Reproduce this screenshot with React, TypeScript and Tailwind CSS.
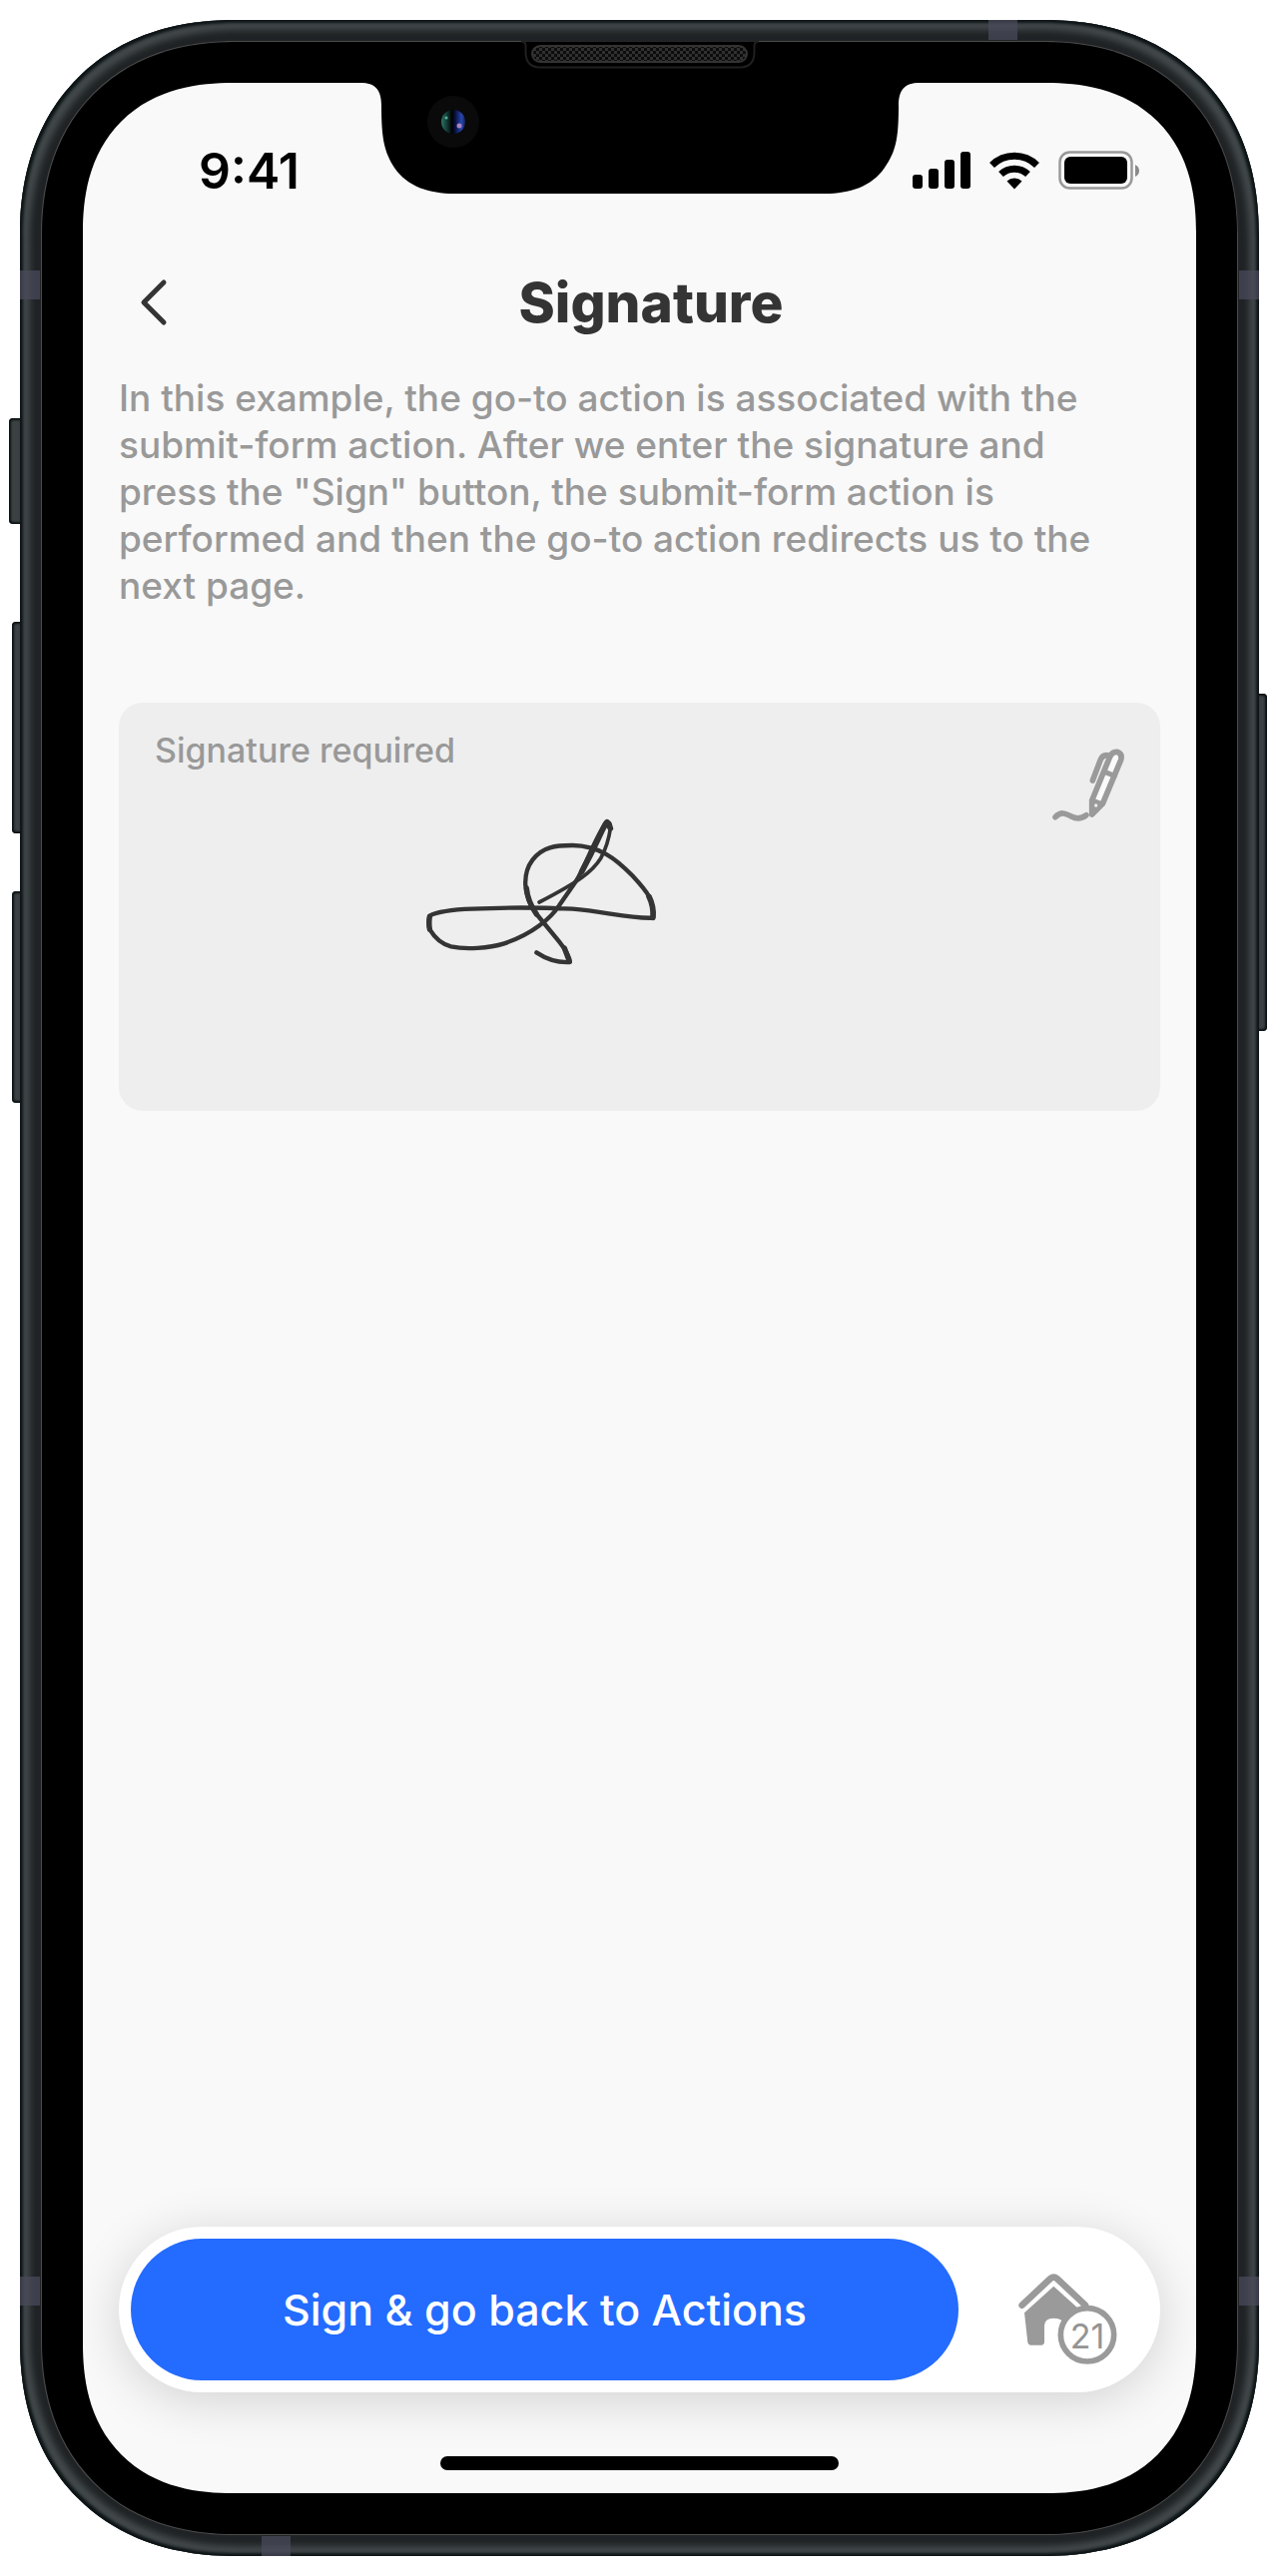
import React from "react";

function SideKeys() {
  const key =
    "absolute bg-[#3b4042] shadow-[inset_0_0_2px_2px_#0c1214]";
  return (
    <>
      <span className={`${key} -left-[11px] top-[399px] h-[106px] w-[14px] rounded-l-[4px]`} />
      <span className={`${key} -left-2 top-[603px] h-[212px] w-[11px] rounded-l-[4px]`} />
      <span className={`${key} -left-2 top-[873px] h-[212px] w-[11px] rounded-l-[4px]`} />
      <span className={`${key} -right-2 top-[675px] h-[338px] w-[11px] rounded-r-[4px]`} />
    </>
  );
}

function AntennaBands() {
  const band = "absolute bg-[#4c4c5c]/70";
  return (
    <>
      <span className={`${band} left-0 top-[251px] h-[29px] w-5`} />
      <span className={`${band} right-0 top-[251px] h-[29px] w-5`} />
      <span className={`${band} bottom-[251px] left-0 h-[29px] w-5`} />
      <span className={`${band} bottom-[251px] right-0 h-[29px] w-5`} />
      <span className={`${band} right-[242px] top-0 h-5 w-[29px]`} />
      <span className={`${band} bottom-0 left-[242px] h-5 w-[29px]`} />
    </>
  );
}

function Notch() {
  return (
    <svg
      className="absolute -top-px left-1/2 -translate-x-1/2"
      width="562"
      height="154"
      viewBox="360 41 562 154"
      aria-hidden="true"
    >
      <defs>
        <pattern id="mesh" width="6" height="6" patternUnits="userSpaceOnUse">
          <rect width="6" height="6" fill="#0c0c0c" />
          <rect width="3" height="3" fill="#303030" />
          <rect x="3" y="3" width="3" height="3" fill="#303030" />
        </pattern>
        <linearGradient id="lens" x1="0" x2="1" y1="0" y2="0">
          <stop offset="0" stopColor="#2b7565" />
          <stop offset="0.3" stopColor="#0c2a26" />
          <stop offset="0.45" stopColor="#000" />
          <stop offset="0.6" stopColor="#0a1446" />
          <stop offset="0.85" stopColor="#2746b0" />
          <stop offset="1" stopColor="#15204d" />
        </linearGradient>
      </defs>
      <path
        d="M361 82H921V83C906 83 900 90 900 106C900 140 897 152 886 168C873 187 851 194 826 194H455C430 194 408 187 395 168C385 152 382 140 382 106C382 90 376 83 361 83Z"
        fill="#000"
      />
      <path
        d="M522 41.500Q526.500 41.500 526.500 46V52Q526.500 67.500 541 67.500H741Q755.500 67.500 755.500 52V46Q755.500 41.500 760 41.500"
        fill="#000"
        stroke="#202020"
        strokeWidth="2"
      />
      <rect x="533" y="46" width="215" height="16" rx="8" fill="url(#mesh)" stroke="#333" strokeWidth="2" />
      <circle cx="454" cy="122" r="26" fill="#0a0a0b" />
      <circle cx="454" cy="122" r="12" fill="url(#lens)" />
      <circle cx="460" cy="126" r="2.500" fill="#a884c4" />
      <circle cx="447" cy="118" r="1.500" fill="#58b09c" />
    </svg>
  );
}

function StatusIcons() {
  return (
    <svg width="228" height="40" viewBox="915 151 228 40" role="img" aria-label="Signal, Wi-Fi and battery">
      <rect x="915" y="175" width="10" height="14" rx="3" />
      <rect x="931" y="169" width="10" height="20" rx="3" />
      <rect x="947" y="160" width="10" height="29" rx="3" />
      <rect x="963" y="152" width="10" height="37" rx="3" />
      <g fill="none" stroke="#000" strokeWidth="7">
        <path d="M994.500 165.500A32 32 0 0 1 1039.500 165.500" />
        <path d="M1003.500 174.500A20 20 0 0 1 1030.500 174.500" />
      </g>
      <path d="M1017 189.500L1009.500 181.500A11 11 0 0 1 1024.500 181.500Z" />
      <rect x="1062.500" y="152.500" width="72" height="36" rx="10" fill="none" stroke="#999" strokeWidth="2.500" />
      <rect x="1067" y="157" width="63" height="27" rx="6" />
      <path d="M1138 165Q1142 167 1142 171T1138 177Z" fill="#8a8a8a" />
    </svg>
  );
}

function Signature() {
  return (
    <svg
      className="absolute left-[281px] top-[86px]"
      width="280"
      height="200"
      viewBox="0 0 840 600"
      role="img"
      aria-label="Handwritten signature"
      fill="none"
      stroke="#343434"
      strokeLinecap="round"
      strokeLinejoin="round"
    >
      <path
        d="M412 493Q460 525 512 522Q512 500 480 460L410 375C370 320 370 255 400 215C430 175 470 171 520 171C600 172 650 210 700 262C750 316 764 335 762 389C690 392 620 370 520 362C430 358 300 358 220 362C160 364 110 372 91 383C86 400 88 415 92 425C110 455 135 470 155 475C200 485 270 480 315 466C400 438 455 390 480 352L530 280C560 235 590 140 624 101"
        strokeWidth="13"
      />
      <path d="M624 101Q634 100 635 115C630 150 622 180 605 210C580 250 540 280 420 342" strokeWidth="11" />
      <path d="M548 250Q575 200 598 150T624 101L634 120" strokeWidth="17" />
      <path d="M762 388Q765 355 750 325" strokeWidth="17" />
      <path d="M91 423Q88 405 91 385M382 300Q386 340 412 378M496 480L511 520" strokeWidth="16" />
    </svg>
  );
}

function PenIcon() {
  return (
    <svg
      className="absolute right-8 top-[45px]"
      width="76"
      height="78"
      viewBox="105 178 228 234"
      aria-hidden="true"
      fill="none"
      stroke="#9a9a9a"
      strokeLinecap="round"
      strokeLinejoin="round"
    >
      <path d="M114 387C130 370 143 375 162 385S198 388 207 381" strokeWidth="17" />
      <path d="M224 379L224 337L277 208Q284 190 299 191Q316 196 311 215L256 347Z" strokeWidth="17" fill="#fafafa" />
      <path d="M264 252L292 263" strokeWidth="15" />
      <path d="M224 379V335L256 347Z" fill="#9a9a9a" strokeWidth="12" />
      <path d="M226 277L250 214Q257 197 276 202" strokeWidth="17" />
      <circle cx="236" cy="352" r="5" fill="#eee" stroke="none" />
    </svg>
  );
}

function HomeIcon() {
  return (
    <svg width="100" height="94" viewBox="480 232 300 282" aria-hidden="true">
      <path d="M498 353L586 273L674 353V449H616V390Q616 369 586 369Q558 370 558 392V443Q557 449 551 450H516Q509 449 508 442Z" fill="#9a9a9a" />
      <path d="M491 330L576 250Q586 242 596 250L681 330" fill="none" stroke="#9a9a9a" strokeWidth="20" strokeLinecap="round" />
      <circle cx="687" cy="419" r="80" fill="#fff" stroke="#9a9a9a" strokeWidth="17" />
    </svg>
  );
}

export default function App() {
  return (
    <div className="flex min-h-screen flex-col bg-white py-5 pl-5 pr-[19px] font-['Inter',sans-serif]">
      <div className="relative flex flex-1 flex-col">
        <SideKeys />
        <div className="relative flex flex-1 flex-col overflow-hidden rounded-[215px] bg-[#1f2325] p-[21px] shadow-[inset_0_0_3px_3px_#0d1416,inset_0_0_6px_10px_#43494b] [corner-shape:superellipse(1.14)]">
          <AntennaBands />
          <div className="relative flex flex-1 flex-col rounded-[194px] border border-[#4b4b4b] bg-black p-[41px] [corner-shape:superellipse(1.14)]">
            <Notch />
            <main className="flex flex-1 flex-col rounded-[150px] bg-[#f9f9f9] px-9 pb-[23px] [corner-shape:superellipse(1.22)]">
              <div className="flex h-[176px] items-center justify-between pl-20 pr-5">
                <time className="text-[50px] font-semibold leading-none text-black">9:41</time>
                <StatusIcons />
              </div>

              <header className="flex h-[88px] items-center">
                <button type="button" aria-label="Back" className="flex h-full w-[71px] items-center pl-5">
                  <svg width="30" height="50" viewBox="0 0 30 50" fill="none" stroke="#343434" strokeWidth="5" strokeLinecap="round" strokeLinejoin="round" aria-hidden="true">
                    <path d="M25 5L5 25L25 45" />
                  </svg>
                </button>
                <h1 className="flex-1 pr-12 text-center text-[55px] font-extrabold leading-none text-[#343434]">Signature</h1>
              </header>

              <p className="mt-7 pr-8 text-[37px] font-medium leading-[47px] text-[#999]">
                In this example, the go-to action is associated with the submit-form action. After we enter the
                signature and press the "Sign" button, the submit-form action is performed and then the go-to action
                redirects us to the next page.
              </p>

              <section aria-labelledby="signature-label" className="relative mt-[94px] h-[409px] rounded-[24px] bg-[#eee] px-9 pt-6">
                <h2 id="signature-label" className="text-[34px] font-medium leading-[48px] text-[#999]">
                  Signature required
                </h2>
                <Signature />
                <PenIcon />
              </section>

              <nav className="mt-auto flex h-[166px] items-center rounded-full bg-white p-3 shadow-[0_8px_50px_rgba(0,0,0,0.16)]">
                <button type="button" className="h-full flex-1 rounded-full bg-[#246bff] text-[43px] font-medium text-white">
                  Sign &amp; go back to Actions
                </button>
                <a href="#home" aria-label="Home, 21 notifications" className="relative ml-[60px] mr-[30px] mt-5">
                  <HomeIcon />
                  <span className="absolute bottom-0 right-0 flex h-[62px] w-[62px] items-center justify-center text-[34px] text-[#949494]">
                    21
                  </span>
                </a>
              </nav>

              <div className="mx-auto mt-16 h-[14px] w-[399px] rounded-full bg-black" />
            </main>
          </div>
        </div>
      </div>
    </div>
  );
}
